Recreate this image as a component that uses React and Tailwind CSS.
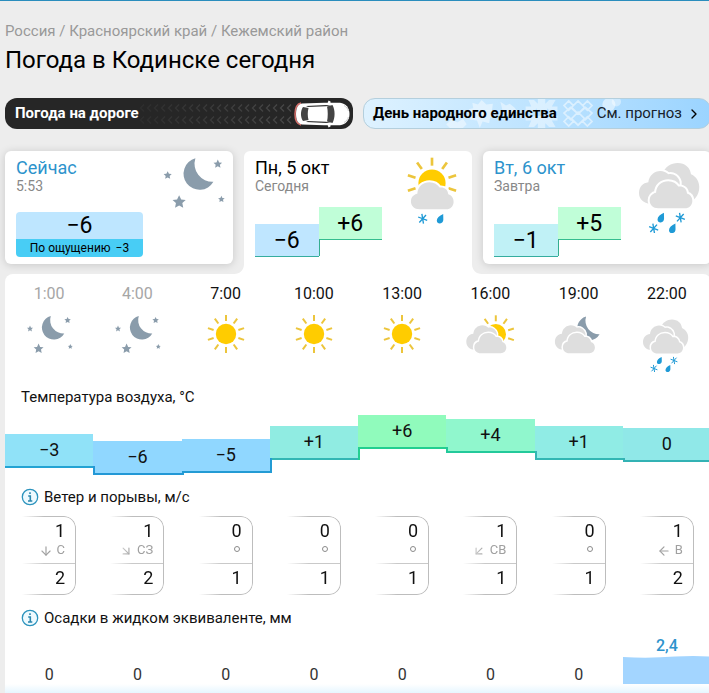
import React from 'react';
import { ChevronRight, ArrowDown, ArrowDownRight, ArrowDownLeft, ArrowLeft } from 'lucide-react';

const crumbs = ['Россия', 'Красноярский край', 'Кежемский район'];

const hours = [
  { time: '1:00', past: true, icon: 'night', temp: '−3', offset: 19, fill: 'bg-[#90e2f8]', line: 'bg-[#23a3d3]', wind: '1', dir: 'С', gust: '2', rain: '0' },
  { time: '4:00', past: true, icon: 'night', temp: '−6', offset: 26, fill: 'bg-[#90d7ff]', line: 'bg-[#2398d6]', wind: '1', dir: 'СЗ', gust: '2', rain: '0' },
  { time: '7:00', icon: 'sun', temp: '−5', offset: 24, fill: 'bg-[#90d7ff]', line: 'bg-[#239bd4]', wind: '0', gust: '1', rain: '0' },
  { time: '10:00', icon: 'sun', temp: '+1', offset: 11, fill: 'bg-[#90ece2]', line: 'bg-[#33b6b4]', wind: '0', gust: '1', rain: '0' },
  { time: '13:00', icon: 'sun', temp: '+6', offset: 0, fill: 'bg-[#90fbbc]', line: 'bg-[#23cf90]', wind: '0', gust: '1', rain: '0' },
  { time: '16:00', icon: 'sunCloud', temp: '+4', offset: 4, fill: 'bg-[#90f7cd]', line: 'bg-[#23c99b]', wind: '1', dir: 'СВ', gust: '1', rain: '0' },
  { time: '19:00', icon: 'nightCloud', temp: '+1', offset: 11, fill: 'bg-[#90ece5]', line: 'bg-[#33b6b4]', wind: '0', gust: '1', rain: '0' },
  { time: '22:00', icon: 'sleet', temp: '0', offset: 13, fill: 'bg-[#90e8e8]', line: 'bg-[#33b2b4]', wind: '1', dir: 'В', gust: '2', rain: '2,4' }
];

const arrows = {
  'С': ArrowDown,
  'СЗ': ArrowDownRight,
  'СВ': ArrowDownLeft,
  'В': ArrowLeft
};

const FRONT_CLOUD = 'M20 41C16 41 13.5 38.5 13.5 35C13.5 32 15.5 29.8 18.3 29.3C18.5 24 22.5 20.7 27.5 20.7C31 20.7 33.5 22.3 35 24.7C38.5 24.2 41.3 26.3 41.5 29.8C44 30.5 45.5 32.7 45.5 35.3C45.5 38.7 43 41 40 41Z';
const BACK_CLOUD = 'M14 37.5C9 37.5 5.5 34 5.5 29.5C5.5 25 8.5 22 12.5 21.5C13 16.5 17 13 21.5 13C24 13 26 14 27.5 15.5C31 14.5 35 17 36 21L36 30L20 37.5Z';
const FAR_CLOUD = 'M23 15C25 10 29.5 7 34.5 7C40 7 44 10.5 44.5 15.5C48 17 50.7 20.5 50.7 25C50.7 31 47 36 41 37.5L30 30Z';

const Cloud = ({ d }) => (
  <>
    <path d={d} fill="#fff" stroke="#fff" strokeWidth="3" strokeLinejoin="round" />
    <path d={d} fill="#dedede" />
  </>
);

const Sun = ({ cx, cy, angles }) => (
  <g>
    <circle cx={cx} cy={cy} r="10.2" fill="#fc0" />
    {angles.map((a) => (
      <path key={a} d={`M${cx} ${cy - 13}V${cy - 19}`} transform={`rotate(${a} ${cx} ${cy})`} stroke="#ecc53c" strokeWidth="2" />
    ))}
  </g>
);

const Moon = () => (
  <path d="M31 3.7A12 12 0 1 0 44.5 21.3A13.5 13.5 0 0 1 31 3.7Z" fill="#8a9cab" />
);

const Star = ({ x, y, s }) => (
  <path
    d="M0 -1L.3 -.36L.95 -.31L.46 .15L.59 .81L0 .48L-.59 .81L-.46 .15L-.95 -.31L-.3 -.36Z"
    transform={`translate(${x} ${y}) scale(${s})`}
    fill="#8a9cab"
  />
);

const Drop = ({ x, y }) => (
  <path d="M2.4 -3.6C-.6 -2.4 -2.4 -.4 -2.4 1.4C-2.4 2.9 -1.3 3.7 0 3.6C1.6 3.5 2.5 2.2 2.5 .6Z" transform={`translate(${x} ${y})`} fill="#1f9ad6" />
);

const Flake = ({ x, y }) => (
  <path d="M-.6 -3.6L.6 3.6M-3.4 -1.3L3.4 1.3M-2.5 2.8L2.5 -2.8" transform={`translate(${x} ${y})`} stroke="#1f9ad6" strokeWidth="1" />
);

const ALL_RAYS = [0, 36, 72, 108, 144, 180, 216, 252, 288, 324];

const WeatherIcon = ({ name, className }) => (
  <svg viewBox="0 0 60 60" className={className} aria-hidden="true">
    {name === 'night' && (
      <g transform="translate(.8 .3)">
        <Moon />
        <Star x={10.2} y={16.5} s={3.2} />
        <Star x={47.8} y={8} s={3.4} />
        <Star x={18.8} y={36.5} s={5.2} />
        <Star x={50.5} y={34.4} s={2.6} />
      </g>
    )}
    {name === 'sun' && <Sun cx={30} cy={22} angles={ALL_RAYS} />}
    {name === 'sunCloud' && (
      <g transform="translate(.8 .3)">
        <Sun cx={35} cy={22} angles={[324, 0, 36, 72, 108]} />
        <Cloud d={BACK_CLOUD} />
        <Cloud d={FRONT_CLOUD} />
      </g>
    )}
    {name === 'nightCloud' && (
      <g transform="translate(.4 .3)">
        <g transform="translate(5.7 .6)">
          <Moon />
        </g>
        <Cloud d={BACK_CLOUD} />
        <Cloud d={FRONT_CLOUD} />
      </g>
    )}
    {name === 'sleet' && (
      <g transform="translate(.5 .5)">
        <Cloud d={FAR_CLOUD} />
        <Cloud d={BACK_CLOUD} />
        <Cloud d={FRONT_CLOUD} />
        <Drop x={21.8} y={48} />
        <Flake x={36.5} y={48} />
        <Flake x={16.5} y={56} />
        <Drop x={30.4} y={56} />
      </g>
    )}
    {name === 'sunSleet' && (
      <>
        <Sun cx={30} cy={22.5} angles={[252, 288, 324, 0, 36, 72, 108]} />
        <g transform="translate(.7 1.2)">
          <Cloud d={FRONT_CLOUD} />
        </g>
        <Flake x={23} y={49.3} />
        <Drop x={36} y={49.3} />
      </>
    )}
  </svg>
);

const Car = () => (
  <svg viewBox="0 0 58 28" className="h-7 w-[58px] shrink-0" aria-hidden="true">
    <path d="M9 3C5 4 3 8 3 14S5 24 9 25" fill="none" stroke="#d8706c" strokeWidth="1.5" />
    <path d="M10 3.5L32 2.8H48C54 3.5 57.5 8 57.5 14S54 24.500 48 25.200H32L10 24.500C5.500 24 4 19 4 14S5.500 4 10 3.500Z" fill="#fff" />
    <path d="M35.500 3.500L36.500 .5L38.500 1.500V4ZM35.500 24.500L36.500 27.500L38.500 26.500V24Z" fill="#fff" />
    <path d="M14 6L34 5L39 5.500L34 6.200L16 7ZM14 22L34 23L39 22.500L34 21.800L16 21Z" fill="#333" />
    <path d="M11 7L16.500 8C15.500 12 15.500 16 16.500 20L11 21C8.300 17 8.300 11 11 7Z" fill="#444" />
    <path d="M35 6.500L40.500 5C43.300 10 43.300 18 40.500 23L35 21.500C36 17 36 11 35 6.500Z" fill="#444" />
    <path d="M52 5.500C54.500 7 56 9 56.400 11M52 22.500C54.500 21 56 19 56.400 17" fill="none" stroke="#ccc" strokeWidth="1" />
  </svg>
);

const TyreTracks = () => (
  <svg className="h-full min-w-0 flex-1" aria-hidden="true">
    <defs>
      <pattern id="tread" width="7" height="12" patternUnits="userSpaceOnUse" y="4">
        <path d="M5 2.500L1.500 6L5 9.500" fill="none" stroke="#494949" strokeWidth="1.200" />
      </pattern>
      <linearGradient id="treadFade">
        <stop offset="0" stopColor="#262626" stopOpacity=".8" />
        <stop offset="1" stopColor="#262626" stopOpacity="0" />
      </linearGradient>
    </defs>
    <rect y="4" width="100%" height="24" fill="url(#tread)" />
    <rect width="100%" height="100%" fill="url(#treadFade)" />
  </svg>
);

// Leaves, a snowflake and a knot, as on the festive banner
const FolkPattern = () => (
  <svg viewBox="0 0 190 31" className="absolute inset-y-0 left-[76px] h-full w-[190px]" aria-hidden="true">
    <g fill="#fff" fillOpacity=".45">
      <path d="M0 27L6 22L12 25L18 21L22 27L18 31H4Z" />
      <path d="M28 4L34 6L38 1L43 6L50 5L49 12L54 17L47 20L46 26L39 24L36 31L33 23L25 22L28 16L24 11L29 10Z" />
      <path d="M58 3L64 7L68 5L73 9L76 13L70 17L62 16L60 11Z" />
      <path d="M88 1H94L98 5V0H106V5L110 1H117L113 8H119V13H111L108 10V13H97V10L94 13H85V8H91ZM85 18H94L97 21V18H108V21L111 18H119V23H113L117 30H110L106 26V31H98V26L94 30H88L91 23H85Z" />
    </g>
    <g fill="none" stroke="#fff" strokeOpacity=".5" strokeWidth="1.800">
      <path d="M141 2L148 9L141 16L134 9ZM141 14L148 21L141 28L134 21ZM133 9L140 15L133 22L126 15ZM149 9L156 15L149 22L142 15ZM131 2L136 7L131 12L126 7ZM151 2L156 7L151 12L146 7ZM131 19L136 24L131 29L126 24ZM151 19L156 24L151 29L146 24Z" />
    </g>
    <circle cx="174" cy="6" r="7" fill="#fff" fillOpacity=".5" />
    <circle cx="182" cy="3" r="5" fill="#fff" fillOpacity=".4" />
  </svg>
);

const DayTemps = ({ min, max, minClass }) => (
  <div className="flex w-[127px] items-end text-[23px] text-black">
    <div className={`relative h-[33px] flex-1 border-b border-[#35ad9f] text-center leading-[34px] ${minClass}`}>
      {min}
      <span className="absolute -right-px bottom-0 h-[17px] w-px bg-[#35ad8f]" />
    </div>
    <div className="mb-[17px] h-[33px] flex-1 border-b border-[#35bd8f] bg-[#c0fed8] text-center leading-[34px]">{max}</div>
  </div>
);

const InfoLabel = ({ children }) => (
  <div className="flex h-5 items-center gap-[5px] pl-4">
    <button type="button" aria-label="Подробнее" className="shrink-0">
      <svg viewBox="0 0 18 18" className="size-[18px]" aria-hidden="true">
        <circle cx="9" cy="9" r="7.700" fill="#eefaff" stroke="#2b93bd" strokeWidth="1.300" />
        <path d="M9 4.300V6M7.200 8H9.300V13M7 13H11.300" fill="none" stroke="#2b87ad" strokeWidth="1.600" />
      </svg>
    </button>
    <h2 className="text-[15px] leading-5">{children}</h2>
  </div>
);

const TempBar = ({ hour, prev }) => {
  const step = prev ? hour.offset - prev.offset : 0;
  const lineClass = step < -11 ? prev.line : hour.line;

  return (
    <div className={`relative h-[34px] ${hour.fill}`} style={{ marginTop: hour.offset }}>
      <div className="text-center text-[18px] leading-8">{hour.temp}</div>
      <span className={`absolute inset-x-0 bottom-0 h-0.5 ${hour.line}`} />
      {prev && (
        <span
          className={`absolute left-0 w-0.5 ${lineClass}`}
          style={step > 0 ? { bottom: 0, height: step + 2 } : { top: 32, height: 2 - step }}
        />
      )}
    </div>
  );
};

const WindCell = ({ hour }) => {
  const Arrow = arrows[hour.dir];
  return (
    <div className="ml-[17px] h-[79px] w-[54px] rounded-r-xl border-y border-r border-[#bdbdbd] pt-[3px] text-right text-[18px] [mask-image:linear-gradient(to_right,transparent,black_22px)]">
      <div className="h-[22px] pr-2.5 leading-[22px]">{hour.wind}</div>
      <div className="flex h-[22px] items-start justify-end gap-1 border-b border-[#c9c9c9] pr-2.5 text-[13px] leading-4 text-[#a0a0a0]">
        {Arrow ? (
          <>
            <Arrow className="mt-0.5 size-3.5" strokeWidth={2} aria-hidden="true" />
            {hour.dir}
          </>
        ) : (
          <span className="mt-1 mr-0.5 size-1.5 rounded-full border border-[#8a8a8a]" />
        )}
      </div>
      <div className="pr-2.5 leading-7">{hour.gust}</div>
    </div>
  );
};

export default function App() {
  return (
    <div className="min-h-screen overflow-hidden border-t border-[#2a8dbd] bg-[#ededed] font-[Roboto,sans-serif] text-[#111]">
      <main className="-mr-0.5 pt-5 pl-[5px]">
        <nav className="text-[15px] leading-5 text-[#999]">
          {crumbs.map((name, i) => (
            <React.Fragment key={name}>
              {i > 0 && ' / '}
              <a href="#">{name}</a>
            </React.Fragment>
          ))}
        </nav>
        <h1 className="mt-[3px] text-2xl leading-8 text-black">Погода в Кодинске сегодня</h1>

        <div className="mt-[22px] grid grid-cols-2 gap-2.5 text-[15px]">
          <a href="#" className="flex h-[31px] items-center rounded-xl bg-[#262626] pr-[3px] pl-2.5 text-white">
            <span className="font-bold">Погода на дороге</span>
            <TyreTracks />
            <Car />
          </a>
          <a href="#" className="relative flex h-[31px] items-center overflow-hidden rounded-xl border border-[#b4cfdd] bg-linear-to-r from-[#def2ff] to-[#9bd4ff] pr-2 pl-[9px] text-black">
            <FolkPattern />
            <span className="relative flex-1 font-bold">День народного единства</span>
            <span className="relative text-[#17222b]">См. прогноз</span>
            <ChevronRight className="relative ml-1 size-4" strokeWidth={2} aria-hidden="true" />
          </a>
        </div>

        <div className="mt-[22px] grid h-[123px] grid-cols-3 gap-[11px]">
          <a href="#" className="mb-2.5 flex justify-between rounded-md bg-white pt-1.5 pl-[11px] shadow-[0_1px_9px_rgba(0,0,0,0.16)]">
            <div>
              <div className="text-[18px] leading-[22px] text-[#2d93cc]">Сейчас</div>
              <div className="text-sm leading-[14px] text-[#888]">5:53</div>
              <div className="mt-[19px] w-[127px] overflow-hidden rounded-sm text-center text-black">
                <div className="bg-[#bee6ff] pt-px text-[23px] leading-[26px]">−6</div>
                <div className="bg-[#48cdf5] text-xs leading-[18px]">
                  По ощущению <span className="ml-0.5">−3</span>
                </div>
              </div>
            </div>
            <WeatherIcon name="night" className="-mt-1 -ml-2 size-20 shrink-0" />
          </a>

          <div className="relative flex justify-between rounded-t-md bg-white pt-1.5 pl-[11px]">
            <svg viewBox="0 0 10 10" className="absolute right-full bottom-0 size-2.5" aria-hidden="true">
              <path d="M10 0V10H0C6 10 10 6 10 0Z" fill="#fff" />
            </svg>
            <svg viewBox="0 0 10 10" className="absolute bottom-0 left-full size-2.5" aria-hidden="true">
              <path d="M0 0V10H10C4 10 0 6 0 0Z" fill="#fff" />
            </svg>
            <div>
              <div className="text-[18px] leading-[22px] text-black">Пн, 5 окт</div>
              <div className="mb-3.5 text-sm leading-[14px] text-[#888]">Сегодня</div>
              <DayTemps min="−6" max="+6" minClass="bg-[#bfe6ff]" />
            </div>
            <WeatherIcon name="sunSleet" className="-mt-1 -ml-2 size-20 shrink-0" />
          </div>

          <a href="#" className="mb-2.5 flex justify-between rounded-md bg-white pt-1.5 pl-[11px] shadow-[0_1px_9px_rgba(0,0,0,0.16)]">
            <div>
              <div className="text-[18px] leading-[22px] text-[#2d93cc]">Вт, 6 окт</div>
              <div className="mb-3.5 text-sm leading-[14px] text-[#888]">Завтра</div>
              <DayTemps min="−1" max="+5" minClass="bg-[#c0f1f6]" />
            </div>
            <WeatherIcon name="sleet" className="-mt-1 -ml-2 size-20 shrink-0" />
          </a>
        </div>

        <section className="rounded-t-lg bg-white pt-2.5">
          <div className="grid grid-cols-8">
            {hours.map((hour) => (
              <div key={hour.time} className="flex flex-col items-center gap-2">
                <time className={`text-base leading-5 ${hour.past ? 'text-[#a6a6a6]' : ''}`}>{hour.time}</time>
                <WeatherIcon name={hour.icon} className="size-[60px]" />
              </div>
            ))}
          </div>

          <h2 className="mt-[15px] pl-4 text-[15px] leading-5">Температура воздуха, °C</h2>
          <div className="mt-2 grid h-[60px] grid-cols-8 items-start">
            {hours.map((hour, i) => (
              <TempBar key={hour.time} hour={hour} prev={hours[i - 1]} />
            ))}
          </div>

          <div className="mt-3">
            <InfoLabel>Ветер и порывы, м/с</InfoLabel>
          </div>
          <div className="mt-[9px] grid grid-cols-8">
            {hours.map((hour) => (
              <WindCell key={hour.time} hour={hour} />
            ))}
          </div>

          <div className="mt-[13px]">
            <InfoLabel>Осадки в жидком эквиваленте, мм</InfoLabel>
          </div>
          <div className="mt-2 grid h-12 grid-cols-8 items-end text-center text-base leading-5 text-[#333]">
            {hours.map((hour) =>
              hour.rain === '0' ? (
                <div key={hour.time} className="leading-[18px]">{hour.rain}</div>
              ) : (
                <div key={hour.time} className="font-medium text-[#2d93cc]">
                  {hour.rain}
                  <svg viewBox="0 0 88 28" preserveAspectRatio="none" className="block h-7 w-full" aria-hidden="true">
                    <path d="M0 1Q26 2.500 52 .5Q70 -.5 88 .5V28H0Z" fill="#a3d5ff" />
                  </svg>
                </div>
              )
            )}
          </div>
          <div className="h-[9px] bg-linear-to-b from-white to-[#e6f6ff]" />
        </section>
      </main>
    </div>
  );
}
